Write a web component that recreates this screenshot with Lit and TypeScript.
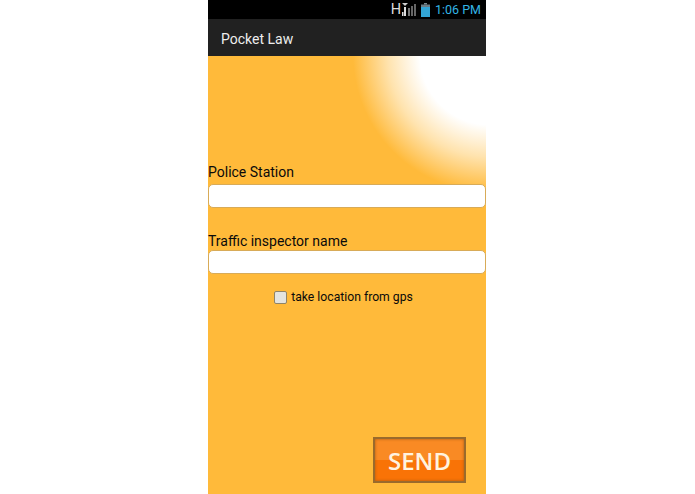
import { LitElement, html, css } from "lit";
import { customElement } from "lit/decorators.js";

@customElement("app-root")
export class AppRoot extends LitElement {
  static styles = css`
    :host { display: block; width: 695px; height: 494px; background: #fff; overflow: hidden; font-family: Roboto, "Liberation Sans", sans-serif; }
    .phone { width: 278px; height: 494px; margin-left: 208px; display: flex; flex-direction: column; background: #ffba3a; }
    .status { height: 19px; background: #000; display: flex; align-items: center; justify-content: flex-end; padding-right: 5px; box-sizing: border-box; }
    .net { font-size: 14.5px; line-height: 19px; color: #ddd; margin-right: 1px; }
    .signal { display: block; margin-right: 4px; }
    .battery { display: block; margin-right: 5px; }
    .time { font-size: 12.5px; line-height: 19px; color: #33b5e5; }
    .bar { height: 37px; background: #212121; color: #ededed; display: flex; align-items: center; padding: 2px 0 0 13px; font-size: 14px; box-sizing: border-box; }
    .body { flex: 1; display: flex; flex-direction: column; background: radial-gradient(circle at 282px -1px, #fff 0, #fff 70px, #fff2da 85px, #ffe3ae 102px, #ffcf76 119px, #ffba3a 137px, #ffba3a 100%); box-sizing: border-box; }
    .label { font-size: 14px; line-height: 17px; color: #0a0a0a; }
    .first { margin-top: 108px; }
    .second { margin-top: 25px; }
    .field { height: 24px; margin-top: 3px; background: #fff; border: 1px solid #d8ab58; border-radius: 5px; box-sizing: border-box; }
    .second + .field { margin-top: 0; }
    .check { display: flex; align-items: center; justify-content: center; margin-top: 15px; margin-right: 7px; height: 16px; font-size: 12.2px; color: #0a0a0a; }
    .box { width: 13px; height: 13px; background: #e4e4e0; border: 1px solid #8f8468; border-radius: 2px; margin-right: 4px; box-sizing: border-box; }
    .spacer { flex: 1; }
    .actions { display: flex; justify-content: flex-end; padding-right: 20px; padding-bottom: 11px; }
    .send { width: 93px; height: 46px; box-sizing: border-box; border: 2px solid #9a6a2c; background: linear-gradient(#f98a24 0, #f98a24 50%, #f97306 50%, #f97306 100%); box-shadow: inset 0 0 3px #a85a10; color: #fff3e0; font-family: "Open Sans", sans-serif; font-weight: 600; font-size: 24px; padding: 0; display: flex; align-items: center; justify-content: center; }
  `;

  render() {
    return html`<div class="phone">
      <div class="status">
        <span class="net">H</span>
        <svg class="signal" width="15" height="17" viewBox="0 0 15 17">
          <path d="M0 2h6L3 5z" fill="#ccc"/>
          <rect x="2" y="6" width="2" height="9" fill="#ddd"/>
          <rect x="0" y="11" width="1.5" height="4" fill="#ddd"/>
          <rect x="6" y="7" width="2" height="8" fill="#777"/>
          <rect x="9" y="5" width="2" height="10" fill="#666"/>
          <rect x="12" y="3" width="2" height="12" fill="#666"/>
        </svg>
        <svg class="battery" width="9" height="14" viewBox="0 0 9 14">
          <rect x="3" y="0" width="3" height="1.5" fill="#7a8a90"/>
          <rect x="0" y="1.5" width="9" height="3" fill="#6c7c84"/>
          <rect x="0" y="4" width="9" height="10" fill="#33a5d5"/>
        </svg>
        <span class="time">1:06 PM</span>
      </div>
      <div class="bar">Pocket Law</div>
      <div class="body">
        <div class="label first">Police Station</div>
        <div class="field"></div>
        <div class="label second">Traffic inspector name</div>
        <div class="field"></div>
        <div class="check"><span class="box"></span>take location from gps</div>
        <div class="spacer"></div>
        <div class="actions"><button class="send">SEND</button></div>
      </div>
    </div>`;
  }
}
